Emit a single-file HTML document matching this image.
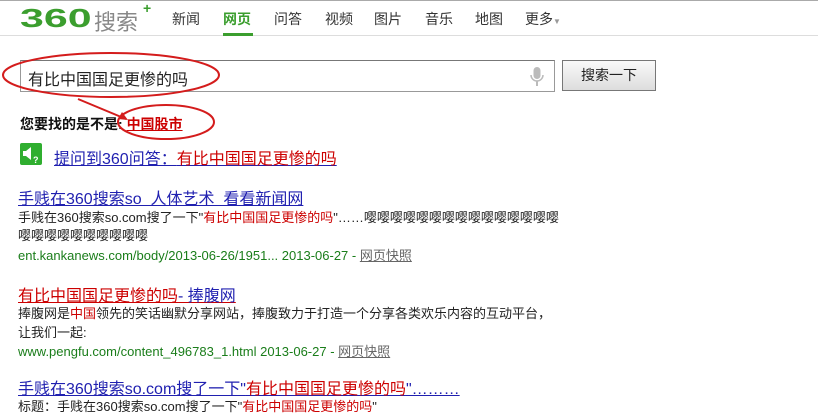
<!DOCTYPE html>
<html><head><meta charset="utf-8"><style>
body{margin:0;width:818px;height:401px;overflow:hidden;background:#fff;font-family:"Liberation Sans","Noto Sans CJK SC",sans-serif;position:relative}
.a{position:absolute;white-space:nowrap}
.nav{font-size:14px;color:#333;top:9px}
.t{font-size:16px;text-decoration:underline;color:#2020b0}
.r{color:#c00}
.s{font-size:13px;color:#222}
.u{font-size:13px;color:#1a7d1a}
.u span{color:#666;text-decoration:underline}
</style></head><body>
<div class="a" style="left:0;top:0;width:818px;height:1px;background:#aaa"></div>
<div class="a" style="left:0;top:35px;width:818px;height:1px;background:#ddd"></div>
<div class="a" style="left:20px;top:3px;font-size:26px;font-weight:bold;color:#3b9e2e;transform:scaleX(1.65);transform-origin:0 0;font-family:'Liberation Sans',sans-serif">360</div>
<div class="a" style="left:94px;top:5px;font-size:22px;color:#888">搜索</div>
<div class="a" style="left:143px;top:0px;font-size:14px;font-weight:bold;color:#3b9e2e">+</div>
<div class="a nav" style="left:172px">新闻</div>
<div class="a nav" style="left:223px;color:#3b9e2e;font-weight:bold">网页</div>
<div class="a" style="left:223px;top:33px;width:30px;height:3px;background:#3b9e2e"></div>
<div class="a nav" style="left:274px">问答</div>
<div class="a nav" style="left:325px">视频</div>
<div class="a nav" style="left:374px">图片</div>
<div class="a nav" style="left:425px">音乐</div>
<div class="a nav" style="left:475px">地图</div>
<div class="a nav" style="left:525px">更多<span style="font-size:8px;color:#999">▼</span></div>
<div class="a" style="left:20px;top:60px;width:533px;height:30px;border:1px solid #999;border-top-color:#777"></div>
<div class="a" style="left:28px;top:66px;font-size:16px;color:#222">有比中国国足更惨的吗</div>
<svg class="a" style="left:530px;top:66px" width="14" height="22"><rect x="3.5" y="1" width="7" height="12" rx="3.5" fill="#bbb"/><path d="M1 9a6 6 0 0 0 12 0" stroke="#bbb" stroke-width="1.5" fill="none"/><rect x="6" y="15" width="2" height="5" fill="#bbb"/></svg>
<div class="a" style="left:562px;top:60px;width:92px;height:29px;border:1px solid #777;background:linear-gradient(#fafafa,#ddd);font-size:14px;text-align:center;line-height:29px;color:#222">搜索一下</div>
<div class="a" style="left:20px;top:114px;font-size:14px;font-weight:bold;color:#111">您要找的是不是: <span style="color:#c00;text-decoration:underline">中国股市</span></div>
<div class="a" style="left:20px;top:143px;width:22px;height:22px;background:#2fae2f;border-radius:2px"></div>
<svg class="a" style="left:20px;top:143px" width="22" height="22"><path d="M3 8h3l5-4v13l-5-4H3z" fill="#fff"/><text x="13" y="20" font-size="9" font-weight="bold" fill="#fff" font-family="Liberation Sans">?</text></svg>
<div class="a t" style="left:54px;top:145px">提问到360问答：<span class="r">有比中国国足更惨的吗</span></div>
<div class="a t" style="left:18px;top:185px">手贱在360搜索so&nbsp; 人体艺术&nbsp; 看看新闻网</div>
<div class="a s" style="left:18px;top:207px">手贱在360搜索so.com搜了一下"<span class="r">有比中国国足更惨的吗</span>"……嘤嘤嘤嘤嘤嘤嘤嘤嘤嘤嘤嘤嘤嘤嘤</div>
<div class="a s" style="left:18px;top:225px">嘤嘤嘤嘤嘤嘤嘤嘤嘤嘤</div>
<div class="a u" style="left:18px;top:245px">ent.kankanews.com/body/2013-06-26/1951... 2013-06-27 - <span>网页快照</span></div>
<div class="a t" style="left:18px;top:282px;color:#c00">有比中国国足更惨的吗<span style="color:#2020b0">- 捧腹网</span></div>
<div class="a s" style="left:18px;top:303px">捧腹网是<span class="r">中国</span>领先的笑话幽默分享网站，捧腹致力于打造一个分享各类欢乐内容的互动平台，</div>
<div class="a s" style="left:18px;top:322px">让我们一起:</div>
<div class="a u" style="left:18px;top:341px">www.pengfu.com/content_496783_1.html 2013-06-27 - <span>网页快照</span></div>
<div class="a t" style="left:18px;top:375px">手贱在360搜索so.com搜了一下"<span class="r">有比中国国足更惨的吗</span>"………</div>
<div class="a s" style="left:18px;top:396px">标题：手贱在360搜索so.com搜了一下"<span class="r">有比中国国足更惨的吗</span>"</div>
<svg class="a" style="left:0;top:0" width="818" height="401"><g fill="none" stroke="#d41c1c" stroke-width="2"><ellipse cx="111" cy="75" rx="108" ry="22"/><ellipse cx="166" cy="122" rx="48" ry="17"/><path d="M78 99L126 119"/></g><path d="M128 120l-10-1 4-7z" fill="#d41c1c"/></svg>
</body></html>
